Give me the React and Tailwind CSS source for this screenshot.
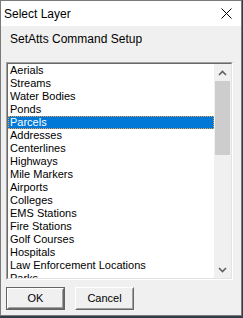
import React from "react";

const items = [
  "Aerials",
  "Streams",
  "Water Bodies",
  "Ponds",
  "Parcels",
  "Addresses",
  "Centerlines",
  "Highways",
  "Mile Markers",
  "Airports",
  "Colleges",
  "EMS Stations",
  "Fire Stations",
  "Golf Courses",
  "Hospitals",
  "Law Enforcement Locations",
  "Parks",
];

export default function App() {
  return (
    <div className="w-[243px] h-[318px] bg-[#2f3d47] overflow-hidden" style={{ fontFamily: '"Liberation Sans", Arial, sans-serif' }}>
      <div className="w-[242px] h-[316px] border border-[#7a7a7a] bg-[#f0f0f0] flex flex-col">
        <div className="h-[25px] bg-white flex items-center justify-between pl-[3px] pr-[8px] shrink-0">
          <span className="text-[12px] text-black leading-none">Select Layer</span>
          <svg width="11" height="11" viewBox="0 0 11 11" className="mr-[1px]">
            <path d="M0.5 0.5 L10.5 10.5 M10.5 0.5 L0.5 10.5" stroke="#000" strokeWidth="1" />
          </svg>
        </div>
        <div className="pl-[9px] pt-[6px] h-[36px] shrink-0 text-[12px] leading-[14px] text-black">SetAtts Command Setup</div>
        <div className="ml-[5px] w-[227px] h-[218px] border border-t-[#a0a0a0] border-l-[#a0a0a0] border-r-white border-b-white shrink-0">
          <div className="w-full h-full border border-t-[#696969] border-l-[#696969] border-r-[#e3e3e3] border-b-[#e3e3e3] bg-white flex">
            <div className="flex-1 overflow-hidden">
              {items.map((it) => (
                <div
                  key={it}
                  className={
                    it === "Parcels"
                      ? "h-[13px] text-[11px] leading-[11px] pl-[1px] bg-[#0078d7] text-white border border-dotted border-[#f0a050] whitespace-nowrap"
                      : "h-[13px] text-[11px] leading-[13px] pl-[2px] text-black whitespace-nowrap"
                  }
                >
                  {it}
                </div>
              ))}
            </div>
            <div className="w-[17px] bg-[#f0f0f0] flex flex-col">
              <div className="h-[17px] flex items-center justify-center">
                <svg width="9" height="6" viewBox="0 0 9 6">
                  <path d="M1 5 L4.5 1.5 L8 5" stroke="#606060" strokeWidth="1.6" fill="none" />
                </svg>
              </div>
              <div className="mx-[1px] h-[74px] bg-[#cdcdcd]" />
              <div className="flex-1" />
              <div className="h-[17px] flex items-center justify-center">
                <svg width="9" height="6" viewBox="0 0 9 6">
                  <path d="M1 1 L4.5 4.5 L8 1" stroke="#606060" strokeWidth="1.6" fill="none" />
                </svg>
              </div>
            </div>
          </div>
        </div>
        <div className="flex gap-[10px] ml-[5px] mt-[7px]">
          <div className="w-[59px] h-[23px] border border-[#646464]">
            <div className="w-full h-full border border-t-white border-l-white border-r-[#696969] border-b-[#696969]">
              <div className="w-full h-full border border-transparent border-r-[#a0a0a0] border-b-[#a0a0a0] flex items-center justify-center text-[11px] text-black">OK</div>
            </div>
          </div>
          <div className="w-[59px] h-[23px] border border-t-white border-l-white border-r-[#696969] border-b-[#696969]">
            <div className="w-full h-full border border-transparent border-r-[#a0a0a0] border-b-[#a0a0a0] flex items-center justify-center text-[11px] text-black">Cancel</div>
          </div>
        </div>
      </div>
    </div>
  );
}
